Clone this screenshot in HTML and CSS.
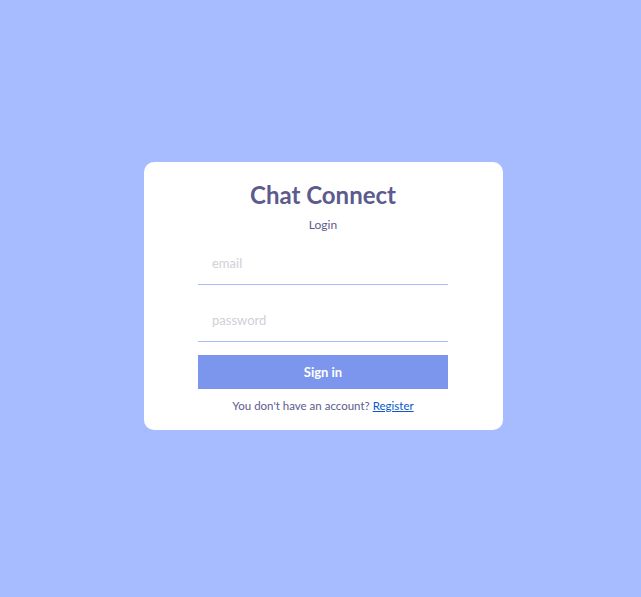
FILE: index.html
```html
<!DOCTYPE html>
<html lang="en">
<head>
<meta charset="utf-8">
<title>Chat Connect</title>
<link rel="stylesheet" href="styles.css">
</head>
<body>
<div class="formContainer">
  <div class="formWrapper">
    <span class="logo">Chat Connect</span>
    <span class="title">Login</span>
    <form class="form">
      <input type="email" placeholder="email">
      <input type="password" placeholder="password">
      <button type="button">Sign in</button>
    </form>
    <p class="note">You don't have an account? <a href="#">Register</a></p>
  </div>
</div>
</body>
</html>
```
FILE: styles.css
```css
html, body {
  margin: 0;
  padding: 0;
}
body {
  font-family: "Lato", "Open Sans", sans-serif;
  background: #a7bcff;
}
.formContainer {
  height: 597px;
  box-sizing: border-box;
  padding: 0 0 5px 6px;
  display: flex;
  align-items: center;
  justify-content: center;
}
.formWrapper {
  background: #fff;
  width: 359px;
  box-sizing: border-box;
  padding: 16px 55px 16px 54px;
  border-radius: 10px;
  display: flex;
  flex-direction: column;
  align-items: center;
  gap: 10px;
}
.logo {
  color: #5d5b8d;
  font-weight: bold;
  font-size: 24px;
  line-height: 33px;
}
.title {
  color: #5d5b8d;
  font-size: 12px;
  line-height: 16px;
  margin-top: -4px;
  margin-bottom: -2px;
}
.form {
  display: flex;
  flex-direction: column;
  gap: 13px;
  width: 250px;
}
.form input {
  font-family: "Lato", "Open Sans", sans-serif;
  font-size: 13px;
  padding: 14px 14px;
  height: 44px;
  box-sizing: border-box;
  border: none;
  border-bottom: 1px solid #a7bcff;
  outline: none;
  width: 250px;
  color: #5d5b8d;
}
.form input::placeholder {
  color: #cfd0d8;
}
.form button {
  font-family: "Lato", "Open Sans", sans-serif;
  background: #7b96ec;
  color: #fff;
  font-weight: bold;
  font-size: 13px;
  height: 34px;
  border: none;
  padding: 0;
}
.note {
  color: #5d5b8d;
  font-size: 11.5px;
  line-height: 16px;
  margin: -1px 0 0;
}
.note a {
  color: #0a58ca;
}
```
